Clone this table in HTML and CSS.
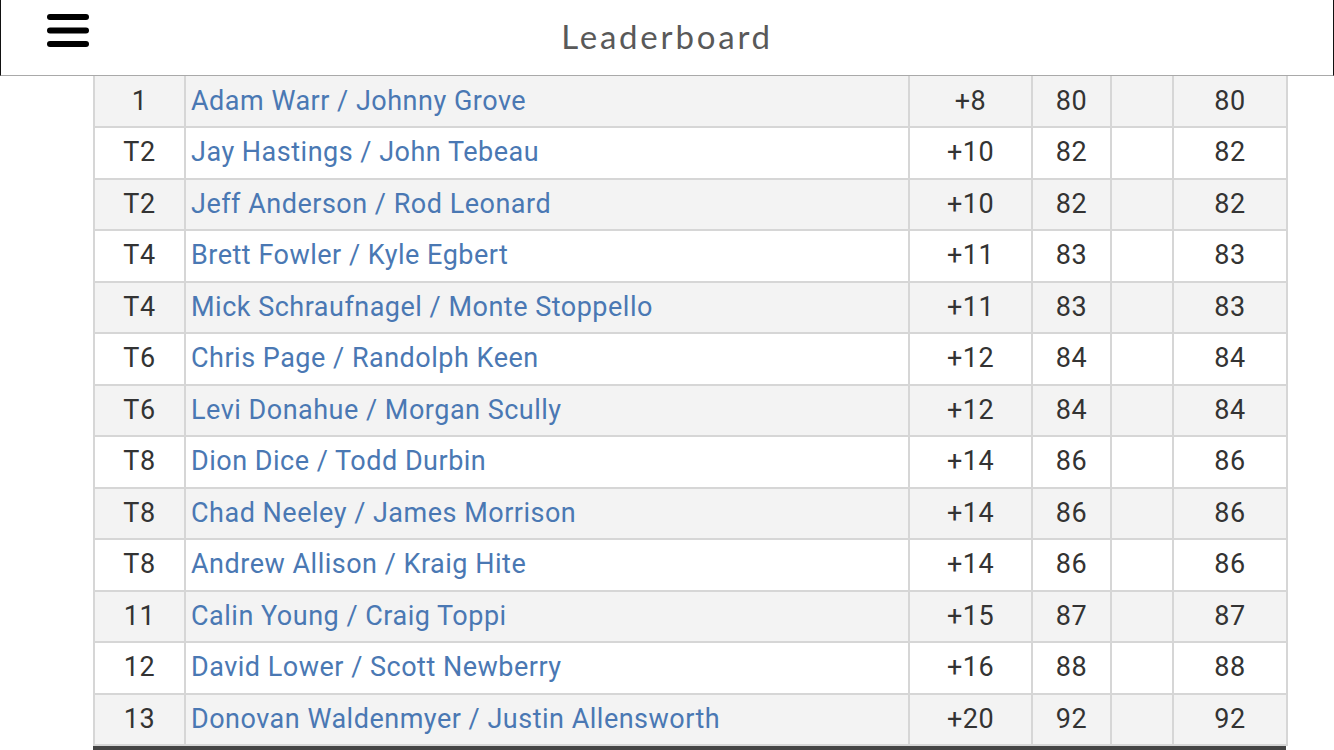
FILE: index.html
```html
<!DOCTYPE html>
<html>
<head>
<meta charset="utf-8">
<title>Leaderboard</title>
<link rel="stylesheet" href="styles.css">
</head>
<body>
<header class="topbar">
  <button class="menu" aria-label="Menu">
    <svg width="42" height="34" viewBox="0 0 42 34"><g stroke="#000" stroke-width="6" stroke-linecap="round"><line x1="3" y1="3" x2="39" y2="3"/><line x1="3" y1="16.5" x2="39" y2="16.5"/><line x1="3" y1="30" x2="39" y2="30"/></g></svg>
  </button>
  <h1 class="title">Leaderboard</h1>
</header>
<main class="content">
  <table class="board">
    <colgroup>
      <col class="c-pos"><col class="c-name"><col class="c-par"><col class="c-tot"><col class="c-blank"><col class="c-net">
    </colgroup>
    <tbody>
      <tr><td class="pos">1</td><td class="name"><a href="#">Adam Warr / Johnny Grove</a></td><td>+8</td><td>80</td><td></td><td>80</td></tr>
      <tr><td class="pos">T2</td><td class="name"><a href="#">Jay Hastings / John Tebeau</a></td><td>+10</td><td>82</td><td></td><td>82</td></tr>
      <tr><td class="pos">T2</td><td class="name"><a href="#">Jeff Anderson / Rod Leonard</a></td><td>+10</td><td>82</td><td></td><td>82</td></tr>
      <tr><td class="pos">T4</td><td class="name"><a href="#">Brett Fowler / Kyle Egbert</a></td><td>+11</td><td>83</td><td></td><td>83</td></tr>
      <tr><td class="pos">T4</td><td class="name"><a href="#">Mick Schraufnagel / Monte Stoppello</a></td><td>+11</td><td>83</td><td></td><td>83</td></tr>
      <tr><td class="pos">T6</td><td class="name"><a href="#">Chris Page / Randolph Keen</a></td><td>+12</td><td>84</td><td></td><td>84</td></tr>
      <tr><td class="pos">T6</td><td class="name"><a href="#">Levi Donahue / Morgan Scully</a></td><td>+12</td><td>84</td><td></td><td>84</td></tr>
      <tr><td class="pos">T8</td><td class="name"><a href="#">Dion Dice / Todd Durbin</a></td><td>+14</td><td>86</td><td></td><td>86</td></tr>
      <tr><td class="pos">T8</td><td class="name"><a href="#">Chad Neeley / James Morrison</a></td><td>+14</td><td>86</td><td></td><td>86</td></tr>
      <tr><td class="pos">T8</td><td class="name"><a href="#">Andrew Allison / Kraig Hite</a></td><td>+14</td><td>86</td><td></td><td>86</td></tr>
      <tr><td class="pos">11</td><td class="name"><a href="#">Calin Young / Craig Toppi</a></td><td>+15</td><td>87</td><td></td><td>87</td></tr>
      <tr><td class="pos">12</td><td class="name"><a href="#">David Lower / Scott Newberry</a></td><td>+16</td><td>88</td><td></td><td>88</td></tr>
      <tr><td class="pos">13</td><td class="name"><a href="#">Donovan Waldenmyer / Justin Allensworth</a></td><td>+20</td><td>92</td><td></td><td>92</td></tr>
    </tbody>
  </table>
  <div class="next-head"></div>
</main>
</body>
</html>
```
FILE: styles.css
```css
html, body {
  margin: 0;
  padding: 0;
  background: #fff;
  overflow: hidden;
}

body {
  font-family: Roboto, "Liberation Sans", sans-serif;
}

.topbar {
  box-sizing: border-box;
  height: 76px;
  border-left: 1px solid #111;
  border-right: 1px solid #111;
  border-bottom: 1px solid #a9a9a9;
  display: flex;
  align-items: center;
}

.menu {
  margin: 14px 0 0 46px;
  padding: 0;
  border: 0;
  background: none;
  display: flex;
  align-self: flex-start;
}

.title {
  flex: 1;
  margin: 0;
  padding-right: 88px;
  text-align: center;
  font-family: Lato, "Open Sans", sans-serif;
  font-weight: 400;
  font-size: 33px;
  letter-spacing: 2.8px;
  color: #595959;
  line-height: 1;
  padding-bottom: 2px;
}

.content {
  padding-left: 93px;
}

.board {
  border-collapse: collapse;
  table-layout: fixed;
  width: 1193px;
  font-size: 27px;
  letter-spacing: 0.5px;
  color: #333;
}

.c-pos { width: 91px; }
.c-name { width: 724px; }
.c-par { width: 123px; }
.c-tot { width: 79px; }
.c-blank { width: 62px; }
.c-net { width: 114px; }

.board td {
  border: 2px solid #d6d6d6;
  height: 49.5px;
  padding: 0;
  text-align: center;
  vertical-align: middle;
  line-height: 1;
}

.board tr:first-child td {
  border-top: 0;
  height: 50px;
}

.board tr:nth-child(odd) td {
  background: #f3f3f3;
}

.board td.name {
  text-align: left;
  padding-left: 5px;
}

.board a {
  color: #4a78b3;
  text-decoration: none;
}

.next-head {
  width: 1193px;
  height: 12px;
  background: #444;
}
```
